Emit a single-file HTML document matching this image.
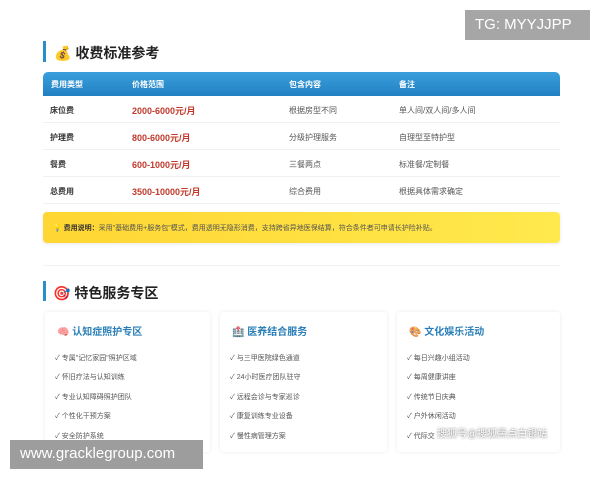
<!DOCTYPE html><html><head><meta charset="utf-8"><style>
*{margin:0;padding:0;box-sizing:border-box}
body{width:600px;height:480px;background:#fff;font-family:"Liberation Sans","Noto Sans CJK SC",sans-serif;position:relative;overflow:hidden;color:#333}
.a{position:absolute}
.bar{width:3px;background:#2b8fc7}
.h{font-size:14px;font-weight:bold;color:#222}
.th{top:72px;left:43px;width:517px;height:24px;background:linear-gradient(#3a9fdc,#2180c2);border-radius:5px 5px 0 0}
.th span{position:absolute;top:7px;font-size:8px;color:#fff;font-weight:bold}
.row{left:43px;width:517px;height:27px;border-bottom:1px solid #f1f1f1;font-size:8px;color:#555}
.row span{position:absolute;top:9px}
.row .p{color:#c0392b;font-weight:bold;font-size:9px;top:8px}
.row .n{font-weight:bold;color:#333}
.card{top:312px;height:140px;background:#fff;box-shadow:0 0 4px rgba(0,0,0,.08);border-radius:3px}
.ct{position:absolute;left:12px;top:11px;font-size:10px;font-weight:bold;color:#2a7fb8}
.li{position:absolute;left:10px;font-size:7px;color:#555}
.wm{background:#a6a6a6;color:#fff;font-size:15px}
</style></head><body>
<div class="a bar" style="left:43px;top:41px;height:21px"></div>
<div class="a h" style="left:54px;top:43px">💰 收费标准参考</div>
<div class="a th"><span style="left:8px">费用类型</span><span style="left:89px">价格范围</span><span style="left:246px">包含内容</span><span style="left:356px">备注</span></div>
<div class="a row" style="top:96px"><span class="n" style="left:7px">床位费</span><span class="p" style="left:89px">2000-6000元/月</span><span style="left:246px">根据房型不同</span><span style="left:356px">单人间/双人间/多人间</span></div>
<div class="a row" style="top:123px"><span class="n" style="left:7px">护理费</span><span class="p" style="left:89px">800-6000元/月</span><span style="left:246px">分级护理服务</span><span style="left:356px">自理型至特护型</span></div>
<div class="a row" style="top:150px"><span class="n" style="left:7px">餐费</span><span class="p" style="left:89px">600-1000元/月</span><span style="left:246px">三餐两点</span><span style="left:356px">标准餐/定制餐</span></div>
<div class="a row" style="top:177px"><span class="n" style="left:7px">总费用</span><span class="p" style="left:89px">3500-10000元/月</span><span style="left:246px">综合费用</span><span style="left:356px">根据具体需求确定</span></div>
<div class="a" style="left:43px;top:212px;width:517px;height:31px;background:linear-gradient(90deg,#ffd633,#ffe94d);border-radius:4px;box-shadow:0 1px 3px rgba(0,0,0,.1);font-size:7px;color:#555;padding:11px 10px">💡 <b style="color:#333">费用说明：</b>采用"基础费用+服务包"模式，费用透明无隐形消费，支持跨省异地医保结算，符合条件者可申请长护险补贴。</div>
<div class="a" style="left:43px;top:265px;width:517px;height:1px;background:#f3f3f3"></div>
<div class="a bar" style="left:43px;top:281px;height:20px"></div>
<div class="a h" style="left:53px;top:283px">🎯 特色服务专区</div>
<div class="a card" style="left:45px;width:165px"><div class="ct">🧠 认知症照护专区</div>
<div class="li" style="top:41px">✓ 专属"记忆家园"照护区域</div><div class="li" style="top:60px">✓ 怀旧疗法与认知训练</div><div class="li" style="top:80px">✓ 专业认知障碍照护团队</div><div class="li" style="top:99px">✓ 个性化干预方案</div><div class="li" style="top:119px">✓ 安全防护系统</div></div>
<div class="a card" style="left:220px;width:167px"><div class="ct">🏥 医养结合服务</div>
<div class="li" style="top:41px">✓ 与三甲医院绿色通道</div><div class="li" style="top:60px">✓ 24小时医疗团队驻守</div><div class="li" style="top:80px">✓ 远程会诊与专家巡诊</div><div class="li" style="top:99px">✓ 康复训练专业设备</div><div class="li" style="top:119px">✓ 慢性病管理方案</div></div>
<div class="a card" style="left:397px;width:163px"><div class="ct">🎨 文化娱乐活动</div>
<div class="li" style="top:41px">✓ 每日兴趣小组活动</div><div class="li" style="top:60px">✓ 每周健康讲座</div><div class="li" style="top:80px">✓ 传统节日庆典</div><div class="li" style="top:99px">✓ 户外休闲活动</div><div class="li" style="top:119px">✓ 代际交</div></div>
<div class="a" style="left:437px;top:425px;font-size:10px;color:#fff;text-shadow:0 0 2px #555">搜狐号@搜狐黑点白银站</div>
<div class="a wm" style="left:465px;top:10px;width:125px;height:30px;padding:6px 10px">TG: MYYJJPP</div>
<div class="a wm" style="left:10px;top:440px;width:193px;height:29px;padding:5px 10px;background:#9d9d9d">www.gracklegroup.com</div>
</body></html>
